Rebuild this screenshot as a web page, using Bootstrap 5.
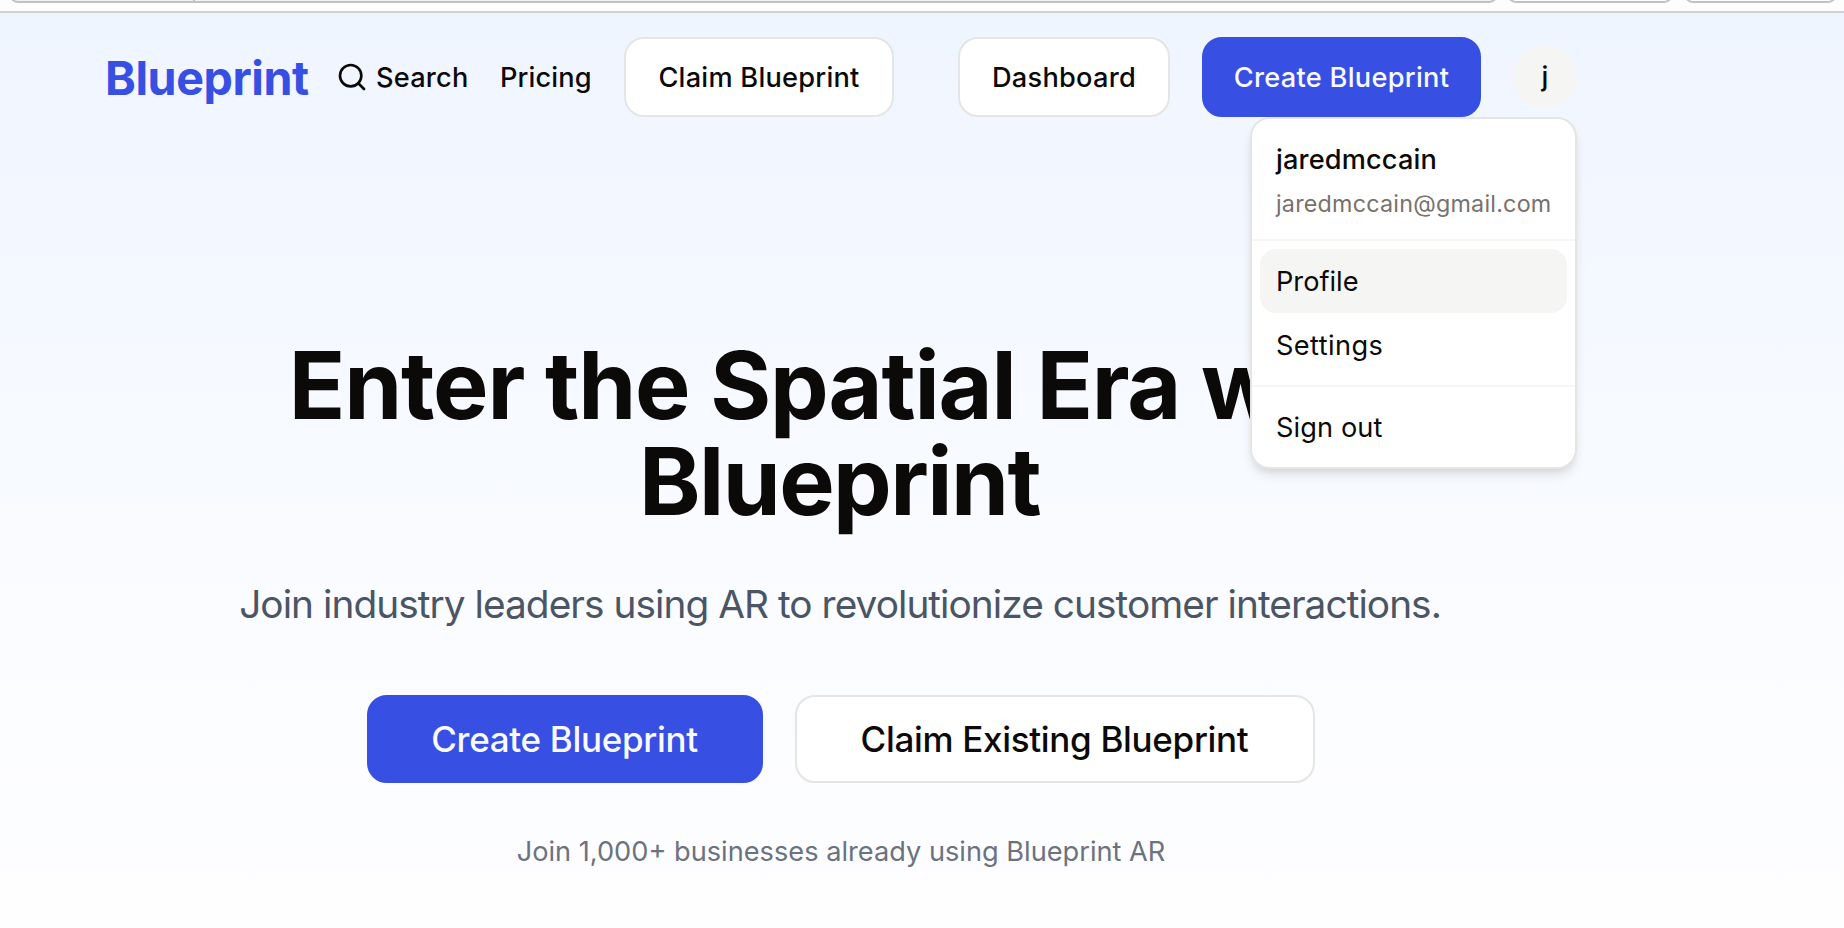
<!DOCTYPE html>
<html lang="en">
<head>
<meta charset="utf-8">
<meta name="viewport" content="width=device-width, initial-scale=1">
<title>Blueprint</title>
<link rel="stylesheet" href="https://cdn.jsdelivr.net/npm/bootstrap@5.3.0/dist/css/bootstrap.min.css">
<style>
  :root { --brand: #374fe3; --ink: #0c0a09; --line: #e5e5e4; }
  body { font-family: Inter, "Liberation Sans", sans-serif; font-size: 27.2px; color: var(--ink); height: 928px; overflow: hidden; background: #fff; }

  /* bottom edge of the browser toolbar */
  .toolbar { height: 13px; background: #fdfdfd; border-bottom: 2px solid #cfd2d5; padding: 0 6px 0 9px; overflow: hidden; }
  .field { height: 32px; margin-top: -29px; border: 2px solid #bfc1c2; border-radius: 9px; background: #fdfdfd; }
  .field-url { width: 1489px; background: #eff1f2; margin-right: 9px; }
  .field-lead { width: 184px; height: 30px; border-right: 2px solid #bfc1c2; }
  .field-a { width: 166px; margin-right: 11px; }
  .field-b { width: 153px; }

  .page { height: 915px; background: linear-gradient(to bottom, #eff5ff 0%, #f9fbff 58%, #fefeff 100%); }
  .frame { width: 1682px; }
  .topbar { padding: 24px 105px 0 105px; height: 104px; }
  .brand { font-size: 46.6px; font-weight: 700; letter-spacing: -.44px; line-height: 56px; color: var(--brand); margin-top: 2px; width: 231px; }
  .link-item { font-weight: 500; color: var(--ink); text-decoration: none; line-height: 40px; padding-top: 2px; white-space: nowrap; }
  .link-item svg { margin-bottom: 2px; }
  .btn { --bs-btn-font-family: inherit; font-weight: 500; border-width: 2px; border-radius: 20px; padding: 0; height: 80px; display: flex; align-items: center; justify-content: center; white-space: nowrap; flex: none; }
  .btn-plain, .btn-plain:hover { background: #fff; border-color: var(--line); color: var(--ink); }
  .btn-brand, .btn-brand:hover { background: var(--brand); border-color: var(--brand); color: #f8faff; }
  .btn-nav { font-size: 27.2px; padding-top: 2px; }
  .btn-hero { font-size: 35px; height: 88px; letter-spacing: -.32px; padding-right: 1px; }
  .avatar { width: 64px; height: 64px; background: #f5f5f4; font-weight: 500; flex: none; padding-top: 1px; }

  .account-menu { position: absolute; top: 72px; right: 0; width: 327px; height: 352px; background: #fff; border: 2px solid var(--line); border-radius: 20px; box-shadow: 0 8px 12px -2px rgba(0,0,0,.1), 0 4px 8px -4px rgba(0,0,0,.1); z-index: 5; }
  .who { height: 120px; padding: 27px 24px 0; }
  .who-name { font-weight: 500; line-height: 28px; letter-spacing: .135px; }
  .who-mail { font-size: 23.3px; line-height: 32px; margin-top: 14px; color: #78716c; letter-spacing: .23px; }
  .rule { height: 2px; background: #f5f5f4; }
  .entry { height: 64px; margin: 0 8px; padding: 2px 16px 0; border-radius: 16px; display: flex; align-items: center; }
  .entry.current { background: #f5f5f4; }

  .hero { padding-top: 220px; }
  .hero h1 { font-size: 93.2px; line-height: 96px; font-weight: 700; margin: 0 0 47px; white-space: nowrap; }
  .tagline { font-size: 38.8px; line-height: 56px; letter-spacing: -.953px; color: #4b5563; margin-bottom: 63px; padding-right: 2px; }
  .proof { line-height: 40px; color: #6b7280; margin: 49px 0 0; }
</style>
</head>
<body>
<div class="toolbar d-flex">
  <div class="field field-url flex-shrink-0"><div class="field-lead"></div></div>
  <div class="field field-a flex-shrink-0"></div>
  <div class="field field-b flex-shrink-0"></div>
</div>
<div class="page">
  <div class="frame">
    <nav class="topbar d-flex align-items-center">
      <div class="brand">Blueprint</div>
      <a href="#" class="link-item d-flex align-items-center" style="width:164px;letter-spacing:.21px">
        <svg width="32" height="32" viewBox="0 0 24 24" fill="none" stroke="currentColor" stroke-width="2" stroke-linecap="round" stroke-linejoin="round" class="me-2"><circle cx="11" cy="11" r="8"/><path d="m21 21-4.3-4.3"/></svg>Search</a>
      <a href="#" class="link-item" style="width:124px;letter-spacing:.1px">Pricing</a>
      <a href="#" class="btn btn-plain btn-nav" style="width:270px;letter-spacing:.24px">Claim Blueprint</a>
      <a href="#" class="btn btn-plain btn-nav" style="width:212px;margin-left:64px;letter-spacing:.25px">Dashboard</a>
      <a href="#" class="btn btn-brand btn-nav" style="width:279px;margin-left:32px;letter-spacing:.28px">Create Blueprint</a>
      <div class="position-relative" style="margin-left:32px">
        <div class="avatar rounded-circle d-flex align-items-center justify-content-center">j</div>
        <div class="account-menu">
          <div class="who">
            <div class="who-name">jaredmccain</div>
            <div class="who-mail">jaredmccain@gmail.com</div>
          </div>
          <div class="rule mb-2"></div>
          <div class="entry current">Profile</div>
          <div class="entry" style="letter-spacing:.39px">Settings</div>
          <div class="rule my-2"></div>
          <div class="entry" style="letter-spacing:.1px">Sign out</div>
        </div>
      </div>
    </nav>
    <main class="hero text-center">
      <h1><span style="letter-spacing:-1.183px">Enter the Spatial Era with</span><br><span style="letter-spacing:-1.56px;padding-right:3px">Blueprint</span></h1>
      <p class="tagline">Join industry leaders using AR to revolutionize customer interactions.</p>
      <div class="d-flex justify-content-center gap-4">
        <a href="#" class="btn btn-brand btn-hero" style="width:396px">Create Blueprint</a>
        <a href="#" class="btn btn-plain btn-hero ms-2" style="width:520px">Claim Existing Blueprint</a>
      </div>
      <p class="proof">Join 1,000+ businesses already using Blueprint AR</p>
    </main>
  </div>
</div>
<script src="https://cdn.jsdelivr.net/npm/bootstrap@5.3.0/dist/js/bootstrap.bundle.min.js"></script>
</body>
</html>
